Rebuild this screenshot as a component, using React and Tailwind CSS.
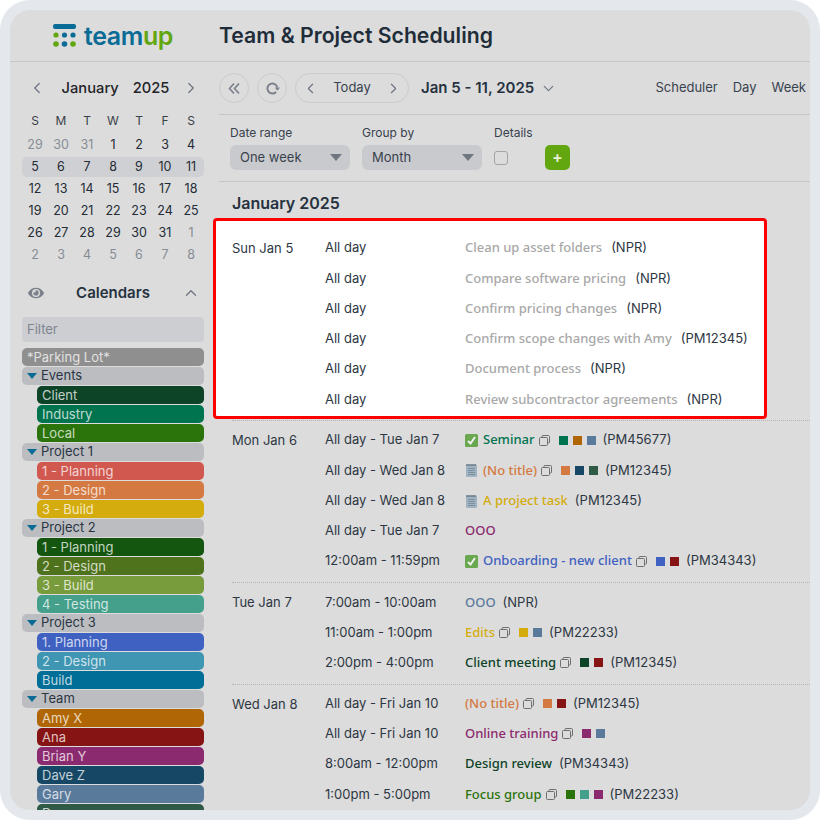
import { ChevronLeft, ChevronRight, ChevronDown, ChevronUp } from "lucide-react";
import { FaEye } from "react-icons/fa";

const weeks = [
  [[29, 1], [30, 1], [31, 1], [1], [2], [3], [4]],
  [[5], [6], [7], [8], [9], [10], [11]],
  [[12], [13], [14], [15], [16], [17], [18]],
  [[19], [20], [21], [22], [23], [24], [25]],
  [[26], [27], [28], [29], [30], [31], [1, 1]],
  [[2, 1], [3, 1], [4, 1], [5, 1], [6, 1], [7, 1], [8, 1]],
];

const c = {
  client: "bg-[#0d4327]",
  industry: "bg-[#00734f]",
  local: "bg-[#2b740b]",
  red: "bg-[#d1584f]",
  orange: "bg-[#d47941]",
  yellow: "bg-[#d4ac0d]",
  olive: "bg-[#4f721c]",
  lime: "bg-[#789b3c]",
  teal: "bg-[#44a08b]",
  blue: "bg-[#3f61c1]",
  sky: "bg-[#3f96b3]",
  ocean: "bg-[#006e96]",
  amber: "bg-[#b06604]",
  maroon: "bg-[#861414]",
  purple: "bg-[#8b2a6f]",
  navy: "bg-[#164764]",
  slate: "bg-[#5a7a9c]",
  pine: "bg-[#2f5a45]",
};

const calendars = [
  { type: "top", name: "*Parking Lot*", color: "bg-[#8f8f8f]" },
  { type: "group", name: "Events" },
  { name: "Client", color: c.client },
  { name: "Industry", color: c.industry },
  { name: "Local", color: c.local },
  { type: "group", name: "Project 1" },
  { name: "1 - Planning", color: c.red },
  { name: "2 - Design", color: c.orange },
  { name: "3 - Build", color: c.yellow },
  { type: "group", name: "Project 2" },
  { name: "1 - Planning", color: "bg-[#14560f]" },
  { name: "2 - Design", color: c.olive },
  { name: "3 - Build", color: c.lime },
  { name: "4 - Testing", color: c.teal },
  { type: "group", name: "Project 3" },
  { name: "1. Planning", color: c.blue },
  { name: "2 - Design", color: c.sky },
  { name: "Build", color: c.ocean },
  { type: "group", name: "Team" },
  { name: "Amy X", color: c.amber },
  { name: "Ana", color: c.maroon },
  { name: "Brian Y", color: c.purple },
  { name: "Dave Z", color: c.navy },
  { name: "Gary", color: c.slate },
  { name: "Dan", color: c.pine },
];

const highlighted = [
  ["All day", "Clean up asset folders", "(NPR)"],
  ["All day", "Compare software pricing", "(NPR)"],
  ["All day", "Confirm pricing changes", "(NPR)"],
  ["All day", "Confirm scope changes with Amy", "(PM12345)"],
  ["All day", "Document process", "(NPR)"],
  ["All day", "Review subcontractor agreements", "(NPR)"],
];

const days = [
  {
    date: "Mon Jan 6",
    pad: "pt-[4px] pb-[6px]",
    rows: [
      { time: "All day - Tue Jan 7", icon: "check", title: "Seminar", color: "text-[#00734f]", copy: true, dots: [c.industry, c.amber, c.slate], code: "(PM45677)" },
      { time: "All day - Wed Jan 8", icon: "note", title: "(No title)", color: "text-[#d47941]", copy: true, dots: [c.orange, c.navy, c.pine], code: "(PM12345)" },
      { time: "All day - Wed Jan 8", icon: "note", title: "A project task", color: "text-[#d4ac0d]", code: "(PM12345)" },
      { time: "All day - Tue Jan 7", title: "OOO", color: "text-[#8b2a6f]" },
      { time: "12:00am - 11:59pm", icon: "check", title: "Onboarding - new client", color: "text-[#3f61c1]", copy: true, dots: [c.blue, c.maroon], code: "(PM34343)" },
    ],
  },
  {
    date: "Tue Jan 7",
    pad: "pt-[4px] pb-[6px]",
    rows: [
      { time: "7:00am - 10:00am", title: "OOO", color: "text-[#5a7a9c]", code: "(NPR)" },
      { time: "11:00am - 1:00pm", title: "Edits", color: "text-[#d4ac0d]", copy: true, dots: [c.yellow, c.slate], code: "(PM22233)" },
      { time: "2:00pm - 4:00pm", title: "Client meeting", color: "text-[#0d4327]", copy: true, dots: [c.client, c.maroon], code: "(PM12345)" },
    ],
  },
  {
    date: "Wed Jan 8",
    pad: "pt-[3.5px]",
    rows: [
      { time: "All day - Fri Jan 10", title: "(No title)", color: "text-[#d47941]", copy: true, dots: [c.orange, c.maroon], code: "(PM12345)" },
      { time: "All day - Fri Jan 10", title: "Online training", color: "text-[#8b2a6f]", copy: true, dots: [c.purple, c.slate] },
      { time: "8:00am - 12:00pm", title: "Design review", color: "text-[#0d4327]", code: "(PM34343)" },
      { time: "1:00pm - 5:00pm", title: "Focus group", color: "text-[#2b740b]", copy: true, dots: [c.local, c.teal, c.purple], code: "(PM22233)" },
    ],
  },
];

function Logo() {
  return (
    <div className="flex items-center gap-[8px]">
      <svg width="23" height="24" viewBox="0 0 23 24">
        <rect x="0" y="0" width="23" height="5" rx="2" fill="#0a6c96" />
        <circle cx="3" cy="11" r="2.6" fill="#62a70f" />
        <circle cx="11.5" cy="11" r="2.6" fill="#0a6c96" />
        <circle cx="20" cy="11" r="2.6" fill="#0a6c96" />
        <circle cx="3" cy="20" r="2.8" fill="#62a70f" />
        <circle cx="11.5" cy="20" r="2.8" fill="#0a6c96" />
        <circle cx="20" cy="20" r="2.8" fill="#62a70f" />
      </svg>
      <span className="text-[25px] leading-[30px] font-semibold tracking-[-0.4px]">
        <span className="text-[#0a6c96]">team</span>
        <span className="text-[#62a70f]">up</span>
      </span>
    </div>
  );
}

function MiniCalendar() {
  return (
    <div>
      <div className="flex items-center h-[24px] pl-[6px] pr-[4px]">
        <ChevronLeft size={18} strokeWidth={1.6} className="text-[#6b7280]" />
        <div className="flex-1 flex justify-center gap-[14px] pl-[3px] text-[14.7px] font-medium text-[#1f2328]">
          <span>January</span>
          <span>2025</span>
        </div>
        <ChevronRight size={18} strokeWidth={1.6} className="text-[#6b7280]" />
      </div>
      <div className="grid grid-cols-7 mt-[10px] h-[22px] items-center text-center text-[12px] text-[#3a4048]">
        {["S", "M", "T", "W", "T", "F", "S"].map((d, i) => (
          <span key={i}>{d}</span>
        ))}
      </div>
      <div className="mt-[2px]">
        {weeks.map((week, i) => (
          <div
            key={i}
            className={`grid grid-cols-7 items-center text-center text-[12.5px] ${
              i === 1 ? "bg-[#cfd0d3] rounded-[5px] h-[20px] my-[1px]" : "h-[22px]"
            }`}
          >
            {week.map(([n, muted], j) => (
              <span key={j} className={muted ? "text-[#878d96]" : "text-[#232b35]"}>
                {n}
              </span>
            ))}
          </div>
        ))}
      </div>
    </div>
  );
}

function CalendarList() {
  return (
    <div className="flex flex-col gap-[1px] mt-[6px]">
      {calendars.map((cal, i) => {
        if (cal.type === "top") {
          return (
            <div key={i} className={`${cal.color} h-[18px] rounded-[5px] px-[5px] text-[13px] leading-[18px] text-white/75 shrink-0`}>
              {cal.name}
            </div>
          );
        }
        if (cal.type === "group") {
          return (
            <div key={i} className="bg-[#bcbdc1] h-[18px] rounded-[5px] pl-[5px] flex items-center gap-[4px] text-[13px] text-[#2a3644] shrink-0">
              <svg width="10" height="6" viewBox="0 0 10 6">
                <path d="M0 0H10L5 6Z" fill="#0a6c96" />
              </svg>
              {cal.name}
            </div>
          );
        }
        return (
          <div key={i} className={`${cal.color} ml-[15px] h-[18px] rounded-[5px] px-[5px] text-[13px] leading-[18px] text-white/75 shrink-0`}>
            {cal.name}
          </div>
        );
      })}
    </div>
  );
}

function Sidebar() {
  return (
    <aside className="w-[209px] shrink-0 pl-[12px] pr-[15px] pt-[14px] overflow-hidden">
      <MiniCalendar />
      <div className="flex items-center mt-[15px] h-[24px] pl-[6px] pr-[4px]">
        <FaEye size={16} className="text-[#7b828c]" />
        <span className="flex-1 text-center text-[15px] font-semibold text-[#26323f]">Calendars</span>
        <ChevronUp size={18} strokeWidth={1.6} className="text-[#6b7280]" />
      </div>
      <div className="mt-[12px] h-[25px] rounded-[4px] bg-[#cdced1] px-[5px] text-[13px] leading-[25px] text-[#7d8591]">Filter</div>
      <CalendarList />
    </aside>
  );
}

function Toolbar() {
  return (
    <div className="h-[53px] shrink-0 flex items-center border-b border-[#c6c6c8]">
      <button className="w-[30px] h-[30px] rounded-full border border-[#cbcbce] flex items-center justify-center">
        <svg width="13" height="13" viewBox="0 0 13 13" fill="none" stroke="#7b828c" strokeWidth="1.7">
          <path d="M6 1.5L1.5 6.5L6 11.5" />
          <path d="M11 1.5L6.5 6.5L11 11.5" />
        </svg>
      </button>
      <button className="ml-[8px] w-[30px] h-[30px] rounded-full border border-[#cbcbce] flex items-center justify-center">
        <svg width="15" height="15" viewBox="0 0 15 15" fill="none">
          <path d="M11 11A5 5 0 1 1 12.3 6.5" stroke="#7b828c" strokeWidth="2" />
          <path d="M9.8 6.5H15L12.4 9.8Z" fill="#7b828c" />
        </svg>
      </button>
      <div className="ml-[8px] w-[114px] h-[30px] rounded-full border border-[#cbcbce] flex items-center justify-between px-[6px] text-[#6b7280]">
        <ChevronLeft size={17} strokeWidth={1.6} />
        <span className="text-[13px] text-[#38424e]">Today</span>
        <ChevronRight size={17} strokeWidth={1.6} />
      </div>
      <div className="ml-[12px] flex items-center gap-[6px] text-[15px] font-semibold text-[#26323f]">
        Jan 5 - 11, 2025
        <ChevronDown size={17} strokeWidth={1.6} className="text-[#6b7280]" />
      </div>
      <div className="ml-auto flex gap-[15px] pr-[4px] text-[13px] text-[#38424e]">
        <span>Scheduler</span>
        <span>Day</span>
        <span>Week</span>
      </div>
    </div>
  );
}

function Select({ label }) {
  return (
    <div className="w-[120px] h-[25px] rounded-[6px] bg-[#c9cacd] pl-[10px] pr-[8px] flex items-center justify-between text-[13px] text-[#38424e]">
      {label}
      <svg width="12" height="7" viewBox="0 0 12 7">
        <path d="M0 0H12L6 7Z" fill="#6f7680" />
      </svg>
    </div>
  );
}

function Filters() {
  return (
    <div className="h-[67px] shrink-0 flex gap-[12px] pl-[11px] pt-[10px] border-b border-[#c6c6c8]">
      <div>
        <div className="text-[12px] leading-[16px] text-[#38424e] mb-[4px]">Date range</div>
        <Select label="One week" />
      </div>
      <div>
        <div className="text-[12px] leading-[16px] text-[#38424e] mb-[4px]">Group by</div>
        <Select label="Month" />
      </div>
      <div className="w-[39px]">
        <div className="text-[12px] leading-[16px] text-[#38424e] mb-[10px]">Details</div>
        <div className="w-[14px] h-[14px] rounded-[3px] border border-[#a0a3a8]" />
      </div>
      <button className="self-start mt-[20px] w-[25px] h-[25px] rounded-[5px] bg-[#62a70f] text-[#e8f0d8] text-[16px] leading-[25px] font-semibold">
        +
      </button>
    </div>
  );
}

function CopyIcon() {
  return (
    <svg width="11" height="11" viewBox="0 0 11 11" fill="none" stroke="#6f6f6f" strokeWidth="1" className="shrink-0">
      <rect x="0.5" y="2.5" width="8" height="8" rx="1" />
      <path d="M3 2.5V1.5a1 1 0 0 1 1-1h5.5a1 1 0 0 1 1 1V7a1 1 0 0 1-1 1H8.5" />
    </svg>
  );
}

function StatusIcon({ type }) {
  if (type === "check") {
    return (
      <svg width="13" height="13" viewBox="0 0 13 13" className="shrink-0 mr-[5px]">
        <rect width="13" height="13" rx="1.5" fill="#6aa84f" />
        <path d="M3 7l2.5 2.5L10 3" fill="none" stroke="#f2f2f2" strokeWidth="2" />
      </svg>
    );
  }
  return (
    <svg width="13" height="14" viewBox="0 0 13 14" className="shrink-0 mr-[5px]">
      <rect x="1" y="1.5" width="11" height="12.5" rx="1" fill="#9fb3c2" />
      <path d="M2 1V3M4 1V3M6 1V3M8 1V3M10 1V3" stroke="#5f6d78" strokeWidth="1.2" />
      <path d="M3 5.5h7M3 7.5h7M3 9.5h7M3 11.5h7" stroke="#7d909e" strokeWidth="1" />
    </svg>
  );
}

function EventRow({ row }) {
  return (
    <div className="flex items-center h-[30.25px] text-[13px] text-[#2d3743]">
      <div className="w-[140px] shrink-0">{row.time}</div>
      <div className="flex items-center whitespace-nowrap">
        {row.icon && <StatusIcon type={row.icon} />}
        <span className={`${row.color} font-['Noto_Sans',sans-serif] font-medium`}>{row.title}</span>
        {row.copy && (
          <span className="ml-[4px]">
            <CopyIcon />
          </span>
        )}
        {row.dots && (
          <span className="flex gap-[5px] ml-[9px]">
            {row.dots.map((d, i) => (
              <span key={i} className={`${d} w-[9px] h-[9px]`} />
            ))}
          </span>
        )}
        {row.code && <span className="ml-[7px]">{row.code}</span>}
      </div>
    </div>
  );
}

function DaySection({ day }) {
  return (
    <div className={`flex ${day.pad} border-b border-dotted border-[#b5b5b5] last:border-b-0`}>
      <div className="w-[93px] shrink-0 text-[13px] leading-[30.25px] text-[#2d3743]">{day.date}</div>
      <div>
        {day.rows.map((row, i) => (
          <EventRow key={i} row={row} />
        ))}
      </div>
    </div>
  );
}

function Highlight() {
  return (
    <div className="border-b border-dotted border-[#b5b5b5]">
      <div className="-ml-[19px] w-[554px] h-[201px] mt-[3px] mb-[1px] bg-white border-[3px] border-[#f00] rounded-[4px] pl-[16px] pt-[12px] flex">
        <div className="w-[93px] shrink-0 text-[13px] leading-[30.25px] text-[#2d3743]">Sun Jan 5</div>
        <div>
          {highlighted.map(([time, title, code], i) => (
            <div key={i} className="flex items-center h-[30.25px] text-[13px] text-[#2d3743]">
              <div className="w-[140px] shrink-0">{time}</div>
              <span className="font-['Noto_Sans',sans-serif] font-medium text-[#a8a8a8]">{title}</span>
              <span className="ml-[9px]">{code}</span>
            </div>
          ))}
        </div>
      </div>
    </div>
  );
}

export default function App() {
  return (
    <div className="w-[820px] h-[820px] bg-white overflow-hidden font-['Inter',sans-serif]">
      <div className="w-full h-full rounded-[30px] bg-[#e4e8ec] p-[10px]">
        <div className="w-full h-full rounded-[20px] bg-[#dcdcdc] overflow-hidden flex flex-col">
          <header className="h-[52px] shrink-0 flex items-center border-b border-[#c6c6c8]">
            <div className="w-[209px] shrink-0 pl-[43px]">
              <Logo />
            </div>
            <h1 className="text-[21.2px] font-semibold text-[#1f2d3a]">Team &amp; Project Scheduling</h1>
          </header>
          <div className="flex flex-1 min-h-0">
            <Sidebar />
            <main className="flex-1 min-w-0 flex flex-col">
              <Toolbar />
              <Filters />
              <div className="flex-1 min-h-0 pl-[13px]">
                <h2 className="h-[33px] flex items-end text-[16px] font-semibold text-[#26323f]">January 2025</h2>
                <Highlight />
                {days.map((day, i) => (
                  <DaySection key={i} day={day} />
                ))}
              </div>
            </main>
          </div>
        </div>
      </div>
    </div>
  );
}
